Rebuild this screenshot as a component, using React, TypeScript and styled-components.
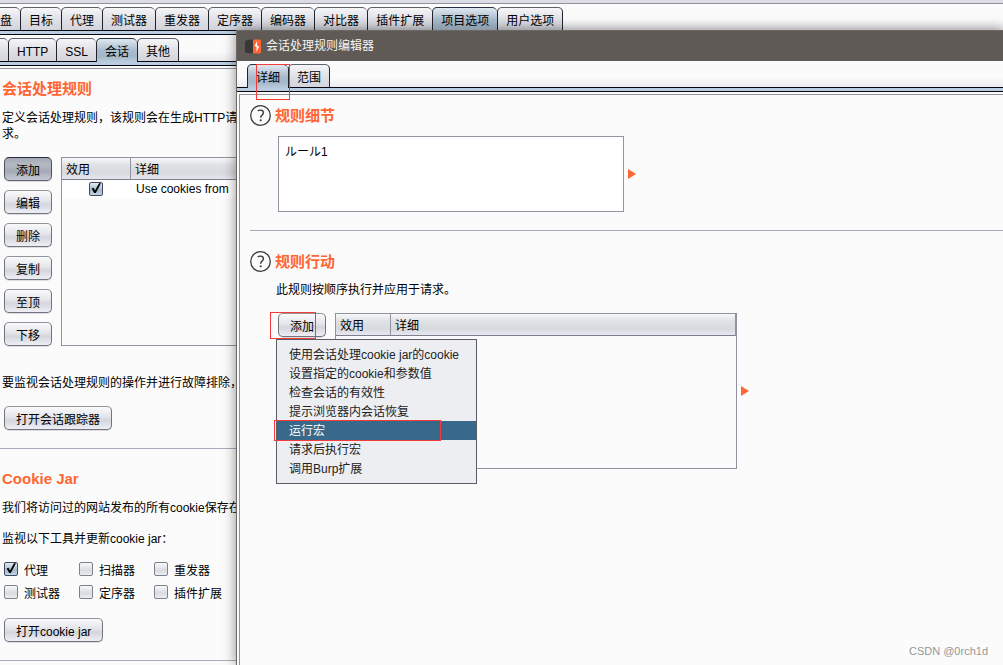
import React from "react";
import styled, { createGlobalStyle, css } from "styled-components";

const GlobalStyle = createGlobalStyle`
  *, *::before, *::after { box-sizing: border-box; }
  body {
    margin: 0;
    background: #fbfbfb;
    color: #000;
    font: 12px/16px "Liberation Sans", "Noto Sans CJK SC", sans-serif;
  }
  button, input, textarea { font: inherit; color: inherit; }
  h2, p { margin: 0; }
`;

const Desktop = styled.div`
  position: relative;
  min-height: 100vh;
  overflow: hidden;
  background: #fbfbfb;
`;

const Strip = styled.div`
  height: 4px;
  background: #dcdce6;
  border-bottom: 1px solid #92929f;
`;

const TabBar = styled.div<{ $inset?: number }>`
  display: flex;
  align-items: flex-start;
  height: 26px;
  padding: 3px 0 0 ${(p) => p.$inset ?? 0}px;
  background: linear-gradient(#fbfbfb 60%, #ececf0);
`;

const Tab = styled.button<{ $cut?: boolean }>`
  position: relative;
  flex: none;
  height: 23px;
  padding: 3px 8px 0 ${(p) => (p.$cut ? 0 : 8)}px;
  border: 1px solid #5d616c;
  border-width: 1px 0 0 1px;
  border-left-color: #22242c;
  border-radius: ${(p) => (p.$cut ? "0 5px 0 0" : "5px 5px 0 0")};
  background: linear-gradient(#f6f6f8, #e2e3e9 45%, #d3d4dc);
  line-height: 16px;
  white-space: nowrap;
  ${(p) => p.$cut && css`border-left-width: 0;`}
  &:last-of-type { border-right: 1px solid #22242c; }
  &[aria-selected="true"] {
    height: 24px;
    padding-bottom: 1px;
    background: linear-gradient(#dfe8f0, #a9bccd 50%, #a4b8ca 75%, #b9cbdc);
    border-top-color: #26323f;
  }
`;

const Rail = styled.div`
  height: 5px;
  background: #bacde0;
  border: 1px solid #05060f;
  border-width: 1px 0;
`;

const MainPanel = styled.main`
  margin-top: 2px;
  padding: 10px 0 0;
  border-top: 1px solid #92929f;
  white-space: nowrap;
`;

const Title = styled.h2`
  color: #ff6633;
  font-size: 15px;
  line-height: 20px;
  font-weight: bold;
`;

const Section = styled.section`
  padding: 0 4px 18px 2px;
  border-bottom: 1px solid #a9a9b9;
  & + & { padding-top: 20px; }
`;

const Text = styled.p<{ $top: number }>`
  margin-top: ${(p) => p.$top}px;
`;

const Button = styled.button<{ $pressed?: boolean }>`
  flex: none;
  height: 24px;
  padding: 3px 11px 0;
  border: 1px solid #70747e;
  border-top-color: #92959c;
  border-radius: 5px;
  background: linear-gradient(#fafafb, #e4e5ea 45%, #d4d6dd 60%, #eeeff5);
  box-shadow: 0 1px 0 #dcdce0;
  line-height: 18px;
  white-space: nowrap;
  ${(p) =>
    p.$pressed &&
    css`
      border-color: #262a35 #4c515c #5e636e;
      background: linear-gradient(#a3a8b3, #b4b9c3 30%, #a4a9b5 60%, #c4c9d5);
    `}
`;

const ButtonLine = styled.div<{ $top: number }>`
  display: flex;
  padding-left: 2px;
  margin-top: ${(p) => p.$top}px;
`;

const RulesRow = styled.div`
  display: flex;
  gap: 9px;
  margin-top: 15px;
  padding-left: 2px;
`;

const ButtonStack = styled.div`
  display: flex;
  flex-direction: column;
  gap: 9px;
`;

const TableBox = styled.div<{ $width?: number; $height: number }>`
  flex: ${(p) => (p.$width ? `0 1 ${p.$width}px` : "1")};
  height: ${(p) => p.$height}px;
  border: 1px solid #92929f;
`;

const Table = styled.table<{ $first: number }>`
  width: 100%;
  table-layout: fixed;
  border-collapse: separate;
  border-spacing: 0;
  th {
    height: 22px;
    padding: 2px 4px 0;
    border-bottom: 1px solid #7d7f8a;
    background: linear-gradient(#f7f8f9, #e0e1e5 35%, #d7d9df 70%, #e6e7f1);
    font-weight: normal;
    text-align: left;
    line-height: 18px;
  }
  th:first-child {
    width: ${(p) => p.$first}px;
    border-right: 1px solid #92929f;
  }
  th:last-child { border-right: 1px solid #92929f; }
  td {
    height: 18px;
    padding: 0 5px;
    background: #fff;
    line-height: 18px;
  }
  td:first-child { padding: 0 6px 0 4px; text-align: center; }
`;

const BoxWrap = styled.span`
  position: relative;
  display: inline-block;
  flex: none;
  width: 14px;
  height: 14px;
  vertical-align: top;
  margin-top: 1px;
  td & { margin-top: 2px; }
  svg {
    position: absolute;
    left: 0;
    top: 0;
    pointer-events: none;
    display: none;
  }
  input:checked + svg { display: block; }
`;

const Box = styled.input`
  appearance: none;
  display: block;
  width: 14px;
  height: 14px;
  margin: 0;
  border: 1px solid #7d818a;
  border-radius: 2px;
  background: linear-gradient(#f9f9fa, #d9dbe1 60%, #ededf2);
  &:checked {
    border-color: #3d4d5e;
    background: linear-gradient(#e3ebf2, #a6bacc 60%, #bfd3e6);
  }
`;

const CheckGrid = styled.div`
  display: grid;
  grid-template-columns: 75px 75px max-content;
  row-gap: 7px;
  margin: 14px 0 18px;
  padding-left: 2px;
`;

const CheckLabel = styled.label`
  display: flex;
  gap: 6px;
  height: 16px;
  line-height: 20px;
`;

const Dialog = styled.div`
  position: absolute;
  left: 236px;
  top: 30px;
  right: 0;
  bottom: 0;
  display: flex;
  flex-direction: column;
  border: 1px solid #6e6965;
  border-width: 1px 0 0 1px;
  background: #fbfbfb;
  box-shadow: 0 0 12px rgba(0, 0, 0, 0.45);
`;

const TitleBar = styled.header`
  display: flex;
  align-items: center;
  gap: 5px;
  height: 30px;
  padding-left: 8px;
  background: #5f5a56;
  color: #f4f4f4;
`;

const DialogPanel = styled.div`
  flex: 1;
  margin: 2px 0 0 2px;
  padding: 10px 0 0 10px;
  border: 1px solid #92929f;
  border-width: 1px 0 0 1px;
`;

const TitleRow = styled.div`
  display: flex;
  align-items: center;
  gap: 4px;
  height: 21px;
`;

const Indented = styled.div<{ $top: number }>`
  position: relative;
  display: flex;
  align-items: center;
  gap: 4px;
  margin-top: ${(p) => p.$top}px;
  padding-left: 28px;
`;

const RuleName = styled.textarea`
  flex: 0 1 346px;
  height: 76px;
  padding: 7px 6px;
  border: 1px solid #92959f;
  border-radius: 0;
  background: #fff;
  resize: none;
  outline: none;
  font-family: "Liberation Sans", "Noto Sans CJK JP", sans-serif;
`;

const DialogSection = styled.section`
  padding-bottom: 18px;
  margin-bottom: 20px;
  & + & { margin-bottom: 0; }
  &:first-child { border-bottom: 1px solid #a9a9b9; }
`;

const ActionText = styled.p`
  margin-top: 10px;
  padding-left: 26px;
`;

const AddCell = styled.div`
  position: relative;
  align-self: flex-start;
  margin-right: 5px;
`;

const Menu = styled.div`
  position: absolute;
  left: -2px;
  top: 26px;
  z-index: 2;
  width: 201px;
  padding: 5px 0;
  border: 1px solid #5b5d63;
  background: #edeef2;
`;

const MenuItem = styled.button<{ $active?: boolean }>`
  display: block;
  width: 100%;
  height: 19px;
  padding: 1px 12px 0;
  border: 0;
  background: ${(p) => (p.$active ? "#39698a" : "transparent")};
  color: ${(p) => (p.$active ? "#fff" : "#222")};
  line-height: 18px;
  text-align: left;
  white-space: nowrap;
`;

const Mark = styled.span<{ $x: number; $y: number; $w: number; $h: number }>`
  position: absolute;
  z-index: 3;
  left: ${(p) => p.$x}px;
  top: ${(p) => p.$y}px;
  width: ${(p) => p.$w}px;
  height: ${(p) => p.$h}px;
  border: 1px solid #f53a3a;
  pointer-events: none;
`;

const Watermark = styled.span`
  position: absolute;
  right: 15px;
  bottom: 6px;
  color: #979797;
  font-size: 11px;
`;

const Check = ({ id, on, label }: { id?: string; on?: boolean; label?: string }) => (
  <BoxWrap>
    <Box type="checkbox" id={id} defaultChecked={on} aria-label={label} />
    <svg width="14" height="14" viewBox="0 0 14 14" aria-hidden="true">
      <path d="M2.6 6.6 L4.6 5.8 L6 8.4 L10 1.2 L12 1.2 L6.8 11 L5.2 11 Z" fill="#000" />
    </svg>
  </BoxWrap>
);

const Help = () => (
  <svg width="21" height="21" viewBox="0 0 21 21" role="img" aria-label="help">
    <circle cx="10.5" cy="10.5" r="9.8" fill="none" stroke="#3c3c3c" strokeWidth="1.3" />
    <path
      d="M7.8 5.9 C9.4 4.7 13.4 4.7 13.4 7.7 C13.4 10 10.7 10 10.7 12.8"
      fill="none"
      stroke="#3c3c3c"
      strokeWidth="1.4"
    />
    <rect x="9.8" y="14.4" width="1.8" height="1.8" fill="#3c3c3c" />
  </svg>
);

const Arrow = () => (
  <svg width="8" height="10" viewBox="0 0 8 10" aria-hidden="true">
    <path d="M0 0 L8 5 L0 10 Z" fill="#ff6633" />
  </svg>
);

const BurpIcon = () => (
  <svg width="16" height="15" viewBox="0 0 16 15" aria-hidden="true">
    <path d="M0 2 L2 1 L8 0.5 V14.5 L2 14 L0 13 Z" fill="#383838" />
    <path d="M8 0.5 H15 L16 1.5 V13.5 L15 14.5 H8 Z" fill="#ff6633" />
    <path d="M12.2 2 L9.6 6.8 L11.8 8.4 L11 12.8 L14.2 8 L12 6.2 Z" fill="#fff" />
  </svg>
);

const mainTabs = ["盘", "目标", "代理", "测试器", "重发器", "定序器", "编码器", "对比器", "插件扩展", "项目选项", "用户选项"];
const subTabs = ["", "HTTP", "SSL", "会话", "其他"];
const ruleButtons = ["添加", "编辑", "删除", "复制", "至顶", "下移"];
const tools = ["代理", "扫描器", "重发器", "测试器", "定序器", "插件扩展"];
const actions = [
  "使用会话处理cookie jar的cookie",
  "设置指定的cookie和参数值",
  "检查会话的有效性",
  "提示浏览器内会话恢复",
  "运行宏",
  "请求后执行宏",
  "调用Burp扩展",
];

const Tabs = ({ items, selected, inset, cut }: { items: string[]; selected: string; inset?: number; cut?: boolean }) => (
  <>
    <TabBar role="tablist" $inset={inset}>
      {items.map((name, i) => (
        <Tab key={name} role="tab" aria-selected={name === selected} $cut={cut && i === 0}>
          {name}
        </Tab>
      ))}
    </TabBar>
    <Rail />
  </>
);

const Head = () => (
  <thead>
    <tr>
      <th scope="col">效用</th>
      <th scope="col">详细</th>
    </tr>
  </thead>
);

export default function App() {
  return (
    <Desktop>
      <GlobalStyle />
      <Strip />
      <Tabs items={mainTabs} selected="项目选项" cut />
      <Tabs items={subTabs} selected="会话" cut />
      <MainPanel>
        <Section>
          <Title>会话处理规则</Title>
          <Text $top={11}>
            定义会话处理规则，该规则会在生成HTTP请
            <br />
            求。
          </Text>
          <RulesRow>
            <ButtonStack>
              {ruleButtons.map((name, i) => (
                <Button key={name} $pressed={i === 0}>
                  {name}
                </Button>
              ))}
            </ButtonStack>
            <TableBox $height={189}>
              <Table $first={69}>
                <Head />
                <tbody>
                  <tr>
                    <td>
                      <Check on label="效用" />
                    </td>
                    <td>Use cookies from</td>
                  </tr>
                </tbody>
              </Table>
            </TableBox>
          </RulesRow>
          <Text $top={29}>要监视会话处理规则的操作并进行故障排除，</Text>
          <ButtonLine $top={15}>
            <Button>打开会话跟踪器</Button>
          </ButtonLine>
        </Section>
        <Section>
          <Title>Cookie Jar</Title>
          <Text $top={11}>我们将访问过的网站发布的所有cookie保存在</Text>
          <Text $top={15}>监视以下工具并更新cookie jar：</Text>
          <CheckGrid>
            {tools.map((name, i) => (
              <CheckLabel key={name} htmlFor={`tool-${i}`}>
                <Check id={`tool-${i}`} on={i === 0} />
                {name}
              </CheckLabel>
            ))}
          </CheckGrid>
          <ButtonLine $top={0}>
            <Button>打开cookie jar</Button>
          </ButtonLine>
        </Section>
      </MainPanel>

      <Dialog role="dialog" aria-label="会话处理规则编辑器">
        <TitleBar>
          <BurpIcon />
          会话处理规则编辑器
        </TitleBar>
        <Tabs items={["详细", "范围"]} selected="详细" inset={10} />
        <Mark $x={19} $y={33} $w={34} $h={36} />
        <DialogPanel>
          <DialogSection>
            <TitleRow>
              <Help />
              <Title>规则细节</Title>
            </TitleRow>
            <Indented $top={10}>
              <RuleName aria-label="规则细节" defaultValue="ルール1" />
              <Arrow />
            </Indented>
          </DialogSection>
          <DialogSection>
            <TitleRow>
              <Help />
              <Title>规则行动</Title>
            </TitleRow>
            <ActionText>此规则按顺序执行并应用于请求。</ActionText>
            <Indented $top={15}>
              <AddCell>
                <Button aria-haspopup="menu" aria-expanded="true">
                  添加
                </Button>
                <Mark $x={-8} $y={-1} $w={46} $h={27} />
                <Menu role="menu">
                  {actions.map((name, i) => (
                    <MenuItem key={name} role="menuitem" $active={i === 4}>
                      {name}
                    </MenuItem>
                  ))}
                  <Mark $x={-3} $y={80} $w={167} $h={21} />
                </Menu>
              </AddCell>
              <TableBox $width={402} $height={156}>
                <Table $first={55}>
                  <Head />
                </Table>
              </TableBox>
              <Arrow />
            </Indented>
          </DialogSection>
        </DialogPanel>
        <Watermark>CSDN @0rch1d</Watermark>
      </Dialog>
    </Desktop>
  );
}
